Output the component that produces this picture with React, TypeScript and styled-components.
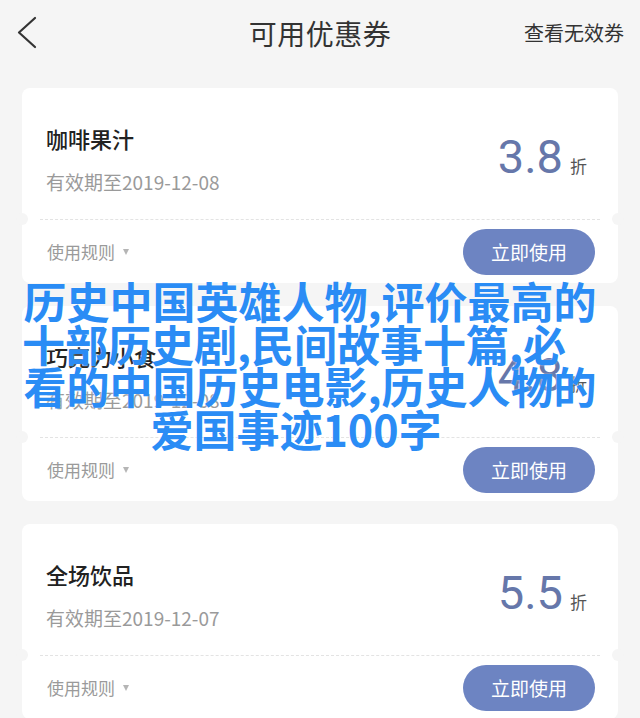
import React from 'react'
import styled, { createGlobalStyle } from 'styled-components'

const GlobalStyle = createGlobalStyle`
  html, body {
    margin: 0;
    padding: 0;
    background: #f5f5f5;
  }
  body {
    font-family: "Noto Sans CJK SC", "Noto Sans", sans-serif;
    color: #333;
  }
`

const Page = styled.div`
  position: relative;
  width: 640px;
  height: 718px;
  overflow: hidden;
  background: #f5f5f5;
`

const Header = styled.div`
  position: relative;
  display: flex;
  align-items: center;
  justify-content: center;
  height: 66px;
`

const BackButton = styled.button`
  position: absolute;
  left: 14px;
  top: 15px;
  width: 26px;
  height: 36px;
  padding: 0;
  border: none;
  background: none;
  cursor: pointer;
`

const Title = styled.h1`
  margin: 0;
  font-size: 28px;
  font-weight: 400;
  color: #333;
  letter-spacing: 0.5px;
`

const HeaderLink = styled.span`
  position: absolute;
  right: 16px;
  top: 20px;
  font-size: 20px;
  line-height: 26px;
  color: #333;
`

const List = styled.div`
  display: flex;
  flex-direction: column;
  gap: 23px;
  padding: 22px 22px 0;
`

const Card = styled.div`
  position: relative;
  display: flex;
  flex-direction: column;
  background: #fff;
  border-radius: 8px;
  height: 195px;
  flex-shrink: 0;
`

const CardTop = styled.div`
  display: flex;
  align-items: flex-start;
  justify-content: space-between;
  height: 131px;
  padding: 35px 31px 0 24px;
  box-sizing: border-box;
`

const Info = styled.div`
  display: flex;
  flex-direction: column;
  gap: 15px;
`

const CouponName = styled.div`
  font-size: 22px;
  line-height: 30px;
  font-weight: 500;
  color: #222;
`

const Expiry = styled.div`
  font-size: 19px;
  line-height: 28px;
  color: #9a9a9a;
`

const Discount = styled.div`
  display: flex;
  align-items: baseline;
  gap: 7px;
  margin-top: 10px;
`

const Rate = styled.span`
  font-family: Roboto, "Noto Sans", sans-serif;
  font-size: 47px;
  line-height: 47px;
  color: #6677aa;
`

const Unit = styled.span`
  font-size: 17px;
  color: #555;
`

const Divider = styled.div`
  position: relative;
  margin: 0 18px;
  border-top: 1.5px dashed #e3e3e3;

  &::before,
  &::after {
    content: '';
    position: absolute;
    top: -7px;
    width: 12px;
    height: 12px;
    border-radius: 50%;
    background: #f5f5f5;
  }
  &::before {
    left: -24px;
  }
  &::after {
    right: -24px;
  }
`

const CardBottom = styled.div`
  display: flex;
  align-items: center;
  justify-content: space-between;
  flex: 1;
  padding: 0 23px 0 25px;
`

const Rules = styled.span`
  display: flex;
  align-items: center;
  gap: 8px;
  font-size: 17px;
  color: #9a9a9a;
`

const Caret = styled.i`
  width: 0;
  height: 0;
  border-left: 3.5px solid transparent;
  border-right: 3.5px solid transparent;
  border-top: 6px solid #b5b5b5;
`

const UseButton = styled.button`
  width: 132px;
  height: 46px;
  border: none;
  border-radius: 23px;
  background: #6d84c2;
  color: #fff;
  font-family: "Noto Sans CJK SC", sans-serif;
  font-size: 19px;
  cursor: pointer;
`

const Watermark = styled.div`
  position: absolute;
  top: 279px;
  left: 20px;
  width: 580px;
  text-align: center;
  white-space: nowrap;
  font-family: "Noto Sans CJK SC", sans-serif;
  font-size: 43px;
  line-height: 42.5px;
  font-weight: 700;
  color: #2a8cf5;
  text-shadow: 0 0 2px rgba(255, 255, 255, 0.7);
  pointer-events: none;
`

const WatermarkLine = styled.div<{ shift?: number }>`
  transform: translateX(${({ shift }) => shift || 0}px);
`

type Coupon = {
  name: string
  expiry: string
  rate: string
}

const coupons: Coupon[] = [
  { name: '咖啡果汁', expiry: '有效期至2019-12-08', rate: '3.8' },
  { name: '巧克力小食', expiry: '有效期至2019-12-08', rate: '4.8' },
  { name: '全场饮品', expiry: '有效期至2019-12-07', rate: '5.5' },
]

const ChevronLeft = () => (
  <svg width="26" height="36" viewBox="0 0 26 36" fill="none">
    <polyline
      points="21,3 5,17.5 21,32"
      stroke="#333"
      strokeWidth="2.2"
      strokeLinecap="round"
      strokeLinejoin="round"
    />
  </svg>
)

const CouponCard: React.FC<{ coupon: Coupon }> = ({ coupon }) => (
  <Card>
    <CardTop>
      <Info>
        <CouponName>{coupon.name}</CouponName>
        <Expiry>{coupon.expiry}</Expiry>
      </Info>
      <Discount>
        <Rate>{coupon.rate}</Rate>
        <Unit>折</Unit>
      </Discount>
    </CardTop>
    <Divider />
    <CardBottom>
      <Rules>
        使用规则
        <Caret />
      </Rules>
      <UseButton>立即使用</UseButton>
    </CardBottom>
  </Card>
)

export default function App() {
  return (
    <>
      <GlobalStyle />
      <Page>
        <Header>
          <BackButton aria-label="返回">
            <ChevronLeft />
          </BackButton>
          <Title>可用优惠券</Title>
          <HeaderLink>查看无效券</HeaderLink>
        </Header>

        <List>
          {coupons.map((c) => (
            <CouponCard key={c.name} coupon={c} />
          ))}
        </List>

        <Watermark>
          <WatermarkLine>历史中国英雄人物,评价最高的</WatermarkLine>
          <WatermarkLine shift={-16}>十部历史剧,民间故事十篇,必</WatermarkLine>
          <WatermarkLine>看的中国历史电影,历史人物的</WatermarkLine>
          <WatermarkLine shift={-14}>爱国事迹100字</WatermarkLine>
        </Watermark>
      </Page>
    </>
  )
}
